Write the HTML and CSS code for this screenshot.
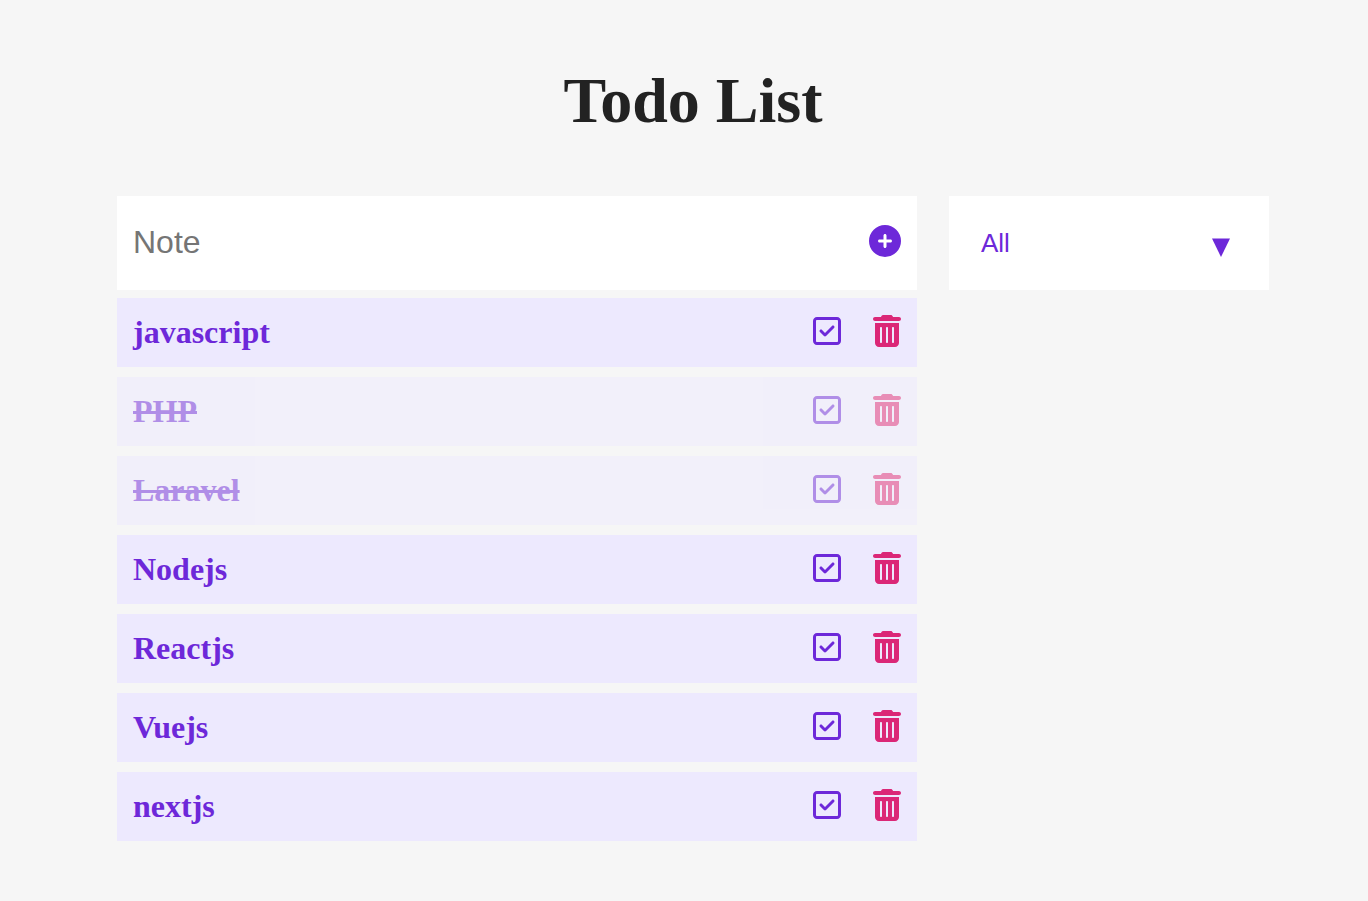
FILE: index.html
```html
<!DOCTYPE html>
<html lang="en">
<head>
  <meta charset="utf-8">
  <meta name="viewport" content="width=device-width, initial-scale=1">
  <title>Todo List</title>
  <link rel="stylesheet" href="styles.css">
</head>
<body>
  <svg class="sprite" aria-hidden="true">
    <symbol id="icon-plus" viewBox="0 0 512 512">
      <path d="M256 512A256 256 0 1 0 256 0a256 256 0 1 0 0 512zM232 344V280H168c-13.3 0-24-10.7-24-24s10.7-24 24-24h64V168c0-13.3 10.7-24 24-24s24 10.7 24 24v64h64c13.3 0 24 10.7 24 24s-10.7 24-24 24H280v64c0 13.3-10.7 24-24 24s-24-10.7-24-24z"/>
    </symbol>
    <symbol id="icon-check" viewBox="0 0 448 512">
      <path d="M64 80c-8.8 0-16 7.2-16 16V416c0 8.8 7.2 16 16 16H384c8.8 0 16-7.2 16-16V96c0-8.8-7.2-16-16-16H64zM0 96C0 60.7 28.7 32 64 32H384c35.3 0 64 28.7 64 64V416c0 35.3-28.7 64-64 64H64c-35.3 0-64-28.7-64-64V96zM337 209L209 337c-9.4 9.4-24.6 9.4-33.9 0l-64-64c-9.4-9.4-9.4-24.6 0-33.9s24.6-9.4 33.9 0l47 47L303 175c9.4-9.4 24.6-9.4 33.9 0s9.4 24.6 0 33.9z"/>
    </symbol>
    <symbol id="icon-trash" viewBox="0 0 448 512">
      <path d="M135.2 17.7C140.6 6.8 151.7 0 163.8 0H284.2c12.1 0 23.2 6.8 28.6 17.7L320 32h96c17.7 0 32 14.3 32 32s-14.3 32-32 32H32C14.3 96 0 81.7 0 64S14.3 32 32 32h96l7.2-14.3zM32 128H416V448c0 35.3-28.7 64-64 64H96c-35.3 0-64-28.7-64-64V128zm96 64c-8.8 0-16 7.2-16 16V432c0 8.8 7.2 16 16 16s16-7.2 16-16V208c0-8.8-7.2-16-16-16zm96 0c-8.8 0-16 7.2-16 16V432c0 8.8 7.2 16 16 16s16-7.2 16-16V208c0-8.8-7.2-16-16-16zm96 0c-8.8 0-16 7.2-16 16V432c0 8.8 7.2 16 16 16s16-7.2 16-16V208c0-8.8-7.2-16-16-16z"/>
    </symbol>
  </svg>

  <main class="page">
    <h1 class="title">Todo List</h1>
    <div class="board">
      <section class="todos">
        <form class="add-form">
          <input class="add-input" type="text" placeholder="Note" aria-label="Note">
          <button class="icon-button add-button" type="button" aria-label="Add note"><svg class="icon icon-wide"><use href="#icon-plus"/></svg></button>
        </form>
        <ul class="list">
          <li class="todo">
            <span class="todo-name">javascript</span>
            <div class="actions">
              <button class="icon-button" type="button" aria-label="Complete javascript"><svg class="icon"><use href="#icon-check"/></svg></button>
              <button class="icon-button delete" type="button" aria-label="Delete javascript"><svg class="icon"><use href="#icon-trash"/></svg></button>
            </div>
          </li>
          <li class="todo done">
            <span class="todo-name">PHP</span>
            <div class="actions">
              <button class="icon-button" type="button" aria-label="Complete PHP"><svg class="icon"><use href="#icon-check"/></svg></button>
              <button class="icon-button delete" type="button" aria-label="Delete PHP"><svg class="icon"><use href="#icon-trash"/></svg></button>
            </div>
          </li>
          <li class="todo done">
            <span class="todo-name">Laravel</span>
            <div class="actions">
              <button class="icon-button" type="button" aria-label="Complete Laravel"><svg class="icon"><use href="#icon-check"/></svg></button>
              <button class="icon-button delete" type="button" aria-label="Delete Laravel"><svg class="icon"><use href="#icon-trash"/></svg></button>
            </div>
          </li>
          <li class="todo">
            <span class="todo-name">Nodejs</span>
            <div class="actions">
              <button class="icon-button" type="button" aria-label="Complete Nodejs"><svg class="icon"><use href="#icon-check"/></svg></button>
              <button class="icon-button delete" type="button" aria-label="Delete Nodejs"><svg class="icon"><use href="#icon-trash"/></svg></button>
            </div>
          </li>
          <li class="todo">
            <span class="todo-name">Reactjs</span>
            <div class="actions">
              <button class="icon-button" type="button" aria-label="Complete Reactjs"><svg class="icon"><use href="#icon-check"/></svg></button>
              <button class="icon-button delete" type="button" aria-label="Delete Reactjs"><svg class="icon"><use href="#icon-trash"/></svg></button>
            </div>
          </li>
          <li class="todo">
            <span class="todo-name">Vuejs</span>
            <div class="actions">
              <button class="icon-button" type="button" aria-label="Complete Vuejs"><svg class="icon"><use href="#icon-check"/></svg></button>
              <button class="icon-button delete" type="button" aria-label="Delete Vuejs"><svg class="icon"><use href="#icon-trash"/></svg></button>
            </div>
          </li>
          <li class="todo">
            <span class="todo-name">nextjs</span>
            <div class="actions">
              <button class="icon-button" type="button" aria-label="Complete nextjs"><svg class="icon"><use href="#icon-check"/></svg></button>
              <button class="icon-button delete" type="button" aria-label="Delete nextjs"><svg class="icon"><use href="#icon-trash"/></svg></button>
            </div>
          </li>
        </ul>
      </section>
      <div class="filter">
        <select class="filter-select" aria-label="Filter todos">
          <option>All</option>
          <option>Completed</option>
          <option>Uncompleted</option>
        </select>
        <svg class="filter-arrow" viewBox="0 0 18 19" aria-hidden="true"><path d="M0 .5H18L9 19Z"/></svg>
      </div>
    </div>
  </main>
</body>
</html>
```
FILE: styles.css
```css
* {
  box-sizing: border-box;
}

body {
  margin: 0;
  background: #f6f6f6;
  color: #222;
  font-family: "Liberation Serif", serif;
}

.sprite {
  display: none;
}

.page {
  padding: 64px 99px 60px 117px;
}

.title {
  margin: 0 0 58px;
  font-size: 64px;
  line-height: 74px;
  text-align: center;
}

.board {
  display: grid;
  grid-template-columns: 5fr 2fr;
  align-items: start;
  gap: 32px;
}

.todos {
  display: flex;
  flex-direction: column;
  gap: 8px;
}

.add-form {
  display: flex;
  align-items: center;
  min-height: 94px;
  padding: 0 16px 2px;
  background: #fff;
}

.add-input {
  flex: 1;
  min-width: 0;
  padding: 0;
  border: 0;
  outline: 0;
  background: transparent;
  font: 32px "Liberation Sans", sans-serif;
}

.add-input::placeholder {
  color: #757575;
}

.icon-button {
  display: flex;
  padding: 0 0 3px;
  border: 0;
  background: none;
  color: #6d28d9;
  cursor: pointer;
}

.icon {
  width: 28px;
  height: 32px;
  fill: currentColor;
}

.icon-wide {
  width: 32px;
}

.delete {
  color: #db2777;
}

.list {
  display: flex;
  flex-direction: column;
  gap: 10px;
  margin: 0;
  padding: 0;
  list-style: none;
}

.todo {
  display: flex;
  align-items: center;
  justify-content: space-between;
  padding: 16px;
  background: #ede9fe;
}

.todo-name {
  color: #6d28d9;
  font-size: 32px;
  font-weight: 700;
  line-height: 37px;
}

.done {
  opacity: 0.5;
}

.done .todo-name {
  text-decoration: line-through;
}

.actions {
  display: flex;
  gap: 32px;
}

.filter {
  position: relative;
}

.filter-select {
  width: 100%;
  min-height: 94px;
  padding: 0 64px 0 32px;
  border: 0;
  border-radius: 0;
  outline: 0;
  appearance: none;
  background: #fff;
  color: #6d28d9;
  font: 26px "Liberation Sans", sans-serif;
}

.filter-arrow {
  position: absolute;
  top: 42px;
  right: 39px;
  width: 18px;
  height: 19px;
  fill: #6d28d9;
  pointer-events: none;
}
```
